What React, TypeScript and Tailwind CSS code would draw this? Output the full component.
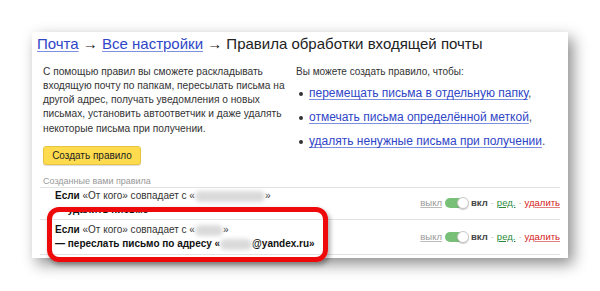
export default function App() {
  const link = "text-[#2f45c8] underline decoration-[#7f8fe0] underline-offset-2";

  const Toggle = () => (
    <span className="relative inline-flex w-[23px] h-[10px] rounded-full bg-[#78c078] items-center">
      <span className="absolute right-[-1px] w-[12px] h-[12px] rounded-full bg-white border border-[#c8c8c8] shadow-[0_1px_1px_rgba(0,0,0,0.2)]" />
    </span>
  );

  const Controls = () => (
    <div className="flex items-center gap-[3px] text-[9.5px] leading-[12px] text-[#333]">
      <span className="text-[#999] underline decoration-[#bbb]">выкл</span>
      <Toggle />
      <span className="font-bold text-[#444]">вкл</span>
      <span className="text-[#aaa]">·</span>
      <span className="text-[#2a8a3a] underline decoration-[#2a8a3a]">ред.</span>
      <span className="text-[#aaa]">·</span>
      <span className="text-[#d62020] underline decoration-[#e08080]">удалить</span>
    </div>
  );

  const Blur = ({ w }: { w: number }) => (
    <span
      className="inline-block h-[11px] rounded-full bg-[#dadada] blur-[2px] align-middle"
      style={{ width: w }}
    />
  );

  return (
    <div className="w-[600px] h-[291px] bg-white overflow-hidden pl-[32px] pt-[32px] font-['Liberation_Sans',Arial,sans-serif]">
      <div className="relative w-[536px] h-[226px] bg-white px-[8px] shadow-[5px_6px_14px_rgba(0,0,0,0.45)]">
        {/* breadcrumbs */}
        <div className="pt-[2px] -ml-[3px] text-[15px] leading-[20px] text-[#222]">
          <span className={link}>Почта</span> → <span className={link}>Все настройки</span> → Правила обработки входящей почты
        </div>

        <div className="flex mt-[9px]">
          <div className="w-[254px] pl-[3px]">
            <p className="mt-[1.5px] w-[245px] text-[10.2px] leading-[14.3px] text-[#333]">
              С помощью правил вы сможете раскладывать входящую почту по папкам, пересылать письма на другой адрес, получать уведомления о новых письмах, установить автоответчик и даже удалять некоторые письма при получении.
            </p>
            <button className="mt-[10px] w-[98px] h-[19px] rounded-[3px] bg-[#ffdb4d] border border-[#e8c540] text-[10px] text-[#222] shadow-[0_1px_1px_rgba(0,0,0,0.15)]">
              Создать правило
            </button>
            <div className="mt-[9px] text-[9px] leading-[12px] text-[#999]">Созданные вами правила</div>
          </div>
          <div className="ml-[2px]">
            <div className="text-[10px] leading-[17px] text-[#333]">Вы можете создать правило, чтобы:</div>
            <ul className="mt-[5px] flex flex-col gap-[7px] text-[12px] leading-[17px]">
              <li className="flex items-center gap-[6px]">
                <span className="w-[4px] h-[4px] rounded-full bg-[#333] ml-[3px]" />
                <span><span className={link}>перемещать письма в отдельную папку</span><span className="text-[#555]">,</span></span>
              </li>
              <li className="flex items-center gap-[6px]">
                <span className="w-[4px] h-[4px] rounded-full bg-[#333] ml-[3px]" />
                <span><span className={link}>отмечать письма определённой меткой</span><span className="text-[#555]">,</span></span>
              </li>
              <li className="flex items-center gap-[6px]">
                <span className="w-[4px] h-[4px] rounded-full bg-[#333] ml-[3px]" />
                <span><span className={link}>удалять ненужные письма при получении</span><span className="text-[#555]">.</span></span>
              </li>
            </ul>
          </div>
        </div>

        {/* rules */}
        <div className="border-t border-[#e2e2e2]">
          <div className="flex justify-between pt-[1px] pb-[2px] border-b border-[#e2e2e2]">
            <div className="pl-[15px] text-[10px] leading-[14px] text-[#333]">
              <div>
                <b className="text-[#111]">Если</b> «От кого» совпадает с «<Blur w={70} />»
              </div>
              <div className="font-bold text-[#111]">— удалить письмо</div>
            </div>
            <Controls />
          </div>
          <div className="flex justify-between pt-[3px] pb-[3px] border-b border-[#e2e2e2]">
            <div className="pl-[15px] text-[10px] leading-[14px] text-[#333]">
              <div>
                <b className="text-[#111]">Если</b> «От кого» совпадает с «<Blur w={28} />»
              </div>
              <div className="font-bold text-[#111]">
                — переслать письмо по адресу «<Blur w={32} />@yandex.ru»
              </div>
            </div>
            <Controls />
          </div>
        </div>

        {/* highlight */}
        <div className="absolute left-[15px] top-[175px] w-[281px] h-[55px] rounded-[12px] border-[5px] border-[#ee0a0a] shadow-[2px_3px_5px_rgba(0,0,0,0.35)]" />
      </div>
    </div>
  );
}
